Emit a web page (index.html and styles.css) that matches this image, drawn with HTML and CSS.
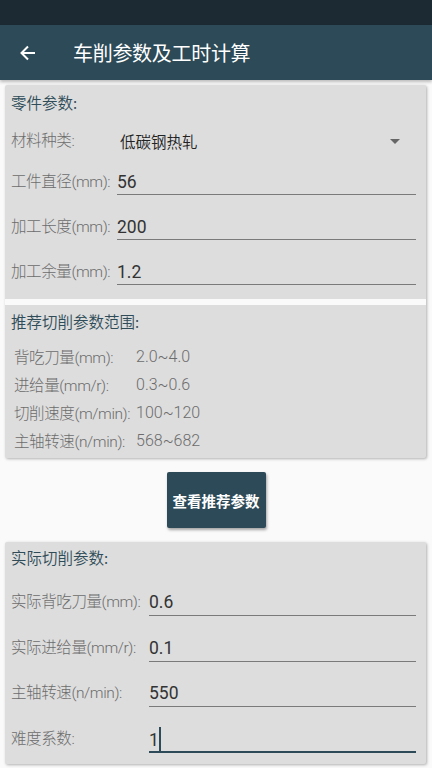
FILE: index.html
```html
<!DOCTYPE html>
<html lang="zh">
<head>
<meta charset="utf-8">
<title>车削参数及工时计算</title>
<link rel="stylesheet" href="styles.css">
</head>
<body>
<div class="status"></div>
<header class="toolbar">
  <svg class="back" width="16" height="16" viewBox="0 0 16 16"><path d="M15 8H2M8 1.5L1.5 8L8 14.5" fill="none" stroke="#fff" stroke-width="2"/></svg>
  <h1 class="title">车削参数及工时计算</h1>
</header>
<main class="content">
  <section class="card card-part">
    <div class="card-head">零件参数:</div>
    <div class="select-row">
      <span class="label">材料种类:</span>
      <span class="select-value">低碳钢热轧</span>
      <span class="caret"></span>
    </div>
    <div class="field">
      <span class="label lw1">工件直径(mm):</span>
      <div class="input">56</div>
    </div>
    <div class="field">
      <span class="label lw1">加工长度(mm):</span>
      <div class="input">200</div>
    </div>
    <div class="field">
      <span class="label lw1">加工余量(mm):</span>
      <div class="input">1.2</div>
    </div>
    <div class="divider"></div>
    <div class="card-head head2">推荐切削参数范围:</div>
    <div class="rec-list">
      <div class="rec"><span class="rec-label">背吃刀量(mm):</span><span class="rec-val">2.0~4.0</span></div>
      <div class="rec"><span class="rec-label">进给量(mm/r):</span><span class="rec-val">0.3~0.6</span></div>
      <div class="rec"><span class="rec-label">切削速度(m/min):</span><span class="rec-val">100~120</span></div>
      <div class="rec"><span class="rec-label">主轴转速(n/min):</span><span class="rec-val">568~682</span></div>
    </div>
  </section>
  <div class="btn-wrap"><button class="btn">查看推荐参数</button></div>
  <section class="card card-actual">
    <div class="card-head head3">实际切削参数:</div>
    <div class="field f2">
      <span class="label lw2">实际背吃刀量(mm):</span>
      <div class="input">0.6</div>
    </div>
    <div class="field f2">
      <span class="label lw2">实际进给量(mm/r):</span>
      <div class="input">0.1</div>
    </div>
    <div class="field f2">
      <span class="label lw2">主轴转速(n/min):</span>
      <div class="input">550</div>
    </div>
    <div class="field f2">
      <span class="label lw2">难度系数:</span>
      <div class="input focused">1<span class="cursor"></span></div>
    </div>
  </section>
</main>
</body>
</html>
```
FILE: styles.css
```css
* { box-sizing: border-box; }
html, body { margin: 0; padding: 0; }
body {
  width: 432px;
  height: 768px;
  overflow: hidden;
  background: #fafafa;
  font-family: Roboto, "Noto Sans CJK SC", sans-serif;
}
.status { height: 25px; background: #1c2b33; }
.toolbar {
  height: 55px;
  background: #2c4a57;
  display: flex;
  align-items: center;
  padding-left: 20px;
  box-shadow: 0 2px 3px rgba(0,0,0,0.25);
  position: relative;
  z-index: 1;
}
.back { display: block; }
.title {
  margin: 0 0 0 37px;
  font-size: 20px;
  font-weight: normal;
  color: #fff;
  font-family: "Noto Sans CJK SC", sans-serif;
  letter-spacing: -0.3px;
}
.content { padding: 5px 6px 0 5px; }
.card {
  background: #dddddd;
  border-radius: 2px;
  box-shadow: 1px 1px 3px rgba(0,0,0,0.3);
}
.card-head {
  height: 34px;
  line-height: 34px;
  padding-left: 6px;
  color: #2f4c58;
  font-size: 15.5px;
  font-weight: 350;
  font-family: "Noto Sans CJK SC", sans-serif;
}
.head2 { height: 32px; line-height: 32px; }
.head3 { height: 40px; line-height: 30px; }
.label {
  color: #6c6c6c;
  font-size: 15.5px;
  font-weight: 300;
  line-height: 24px;
  font-family: Roboto, "Noto Sans CJK SC", sans-serif;
  letter-spacing: -0.4px;
  white-space: nowrap;
  flex: none;
}
.select-row {
  height: 44px;
  display: flex;
  align-items: center;
  padding-left: 6px;
  padding-right: 26px;
}
.select-row .label { width: 109px; }
.select-value {
  flex: 1;
  color: #222;
  font-size: 15.5px;
  font-weight: 350;
  font-family: "Noto Sans CJK SC", sans-serif;
}
.caret {
  width: 0; height: 0;
  border-left: 5px solid transparent;
  border-right: 5px solid transparent;
  border-top: 5px solid #666;
}
.field {
  height: 45px;
  display: flex;
  align-items: flex-start;
  padding: 7px 10px 0 6px;
}
.lw1 { width: 106px; }
.lw2 { width: 138px; }
.input {
  flex: 1;
  height: 25px;
  line-height: 24px;
  border-bottom: 1.5px solid #7a7a7a;
  color: #333;
  font-size: 17.5px;
  font-family: Roboto, sans-serif;
  position: relative;
}
.f2 { height: 45.5px; padding-top: 8px; }
.f2 .input { height: 26px; }
.input.focused { border-bottom: 2px solid #2c4a57; }
.cursor {
  display: inline-block;
  width: 2px;
  height: 25px;
  background: #2c4a57;
  vertical-align: -6px;
}
.divider { height: 6px; background: #fafafa; margin-top: 1px; }
.rec-list { padding: 5px 0 4px 9px; }
.rec {
  height: 28px;
  display: flex;
  align-items: center;
  color: #6c6c6c;
  font-size: 15.5px;
  font-weight: 300;
  font-family: Roboto, "Noto Sans CJK SC", sans-serif;
  letter-spacing: -0.4px;
}
.rec-label { width: 122px; white-space: nowrap; }
.rec-val { letter-spacing: 0; font-size: 16px; }
.btn-wrap {
  display: flex;
  justify-content: center;
  padding: 14px 0;
  margin-left: 1px;
}
.btn {
  width: 99px;
  height: 56px;
  background: #2c4a57;
  color: #fff;
  border: none;
  border-radius: 2px;
  font-size: 14.5px;
  font-weight: bold;
  font-family: "Noto Sans CJK SC", sans-serif;
  padding: 0;
  box-shadow: 1px 2px 3px rgba(0,0,0,0.35);
}
```
